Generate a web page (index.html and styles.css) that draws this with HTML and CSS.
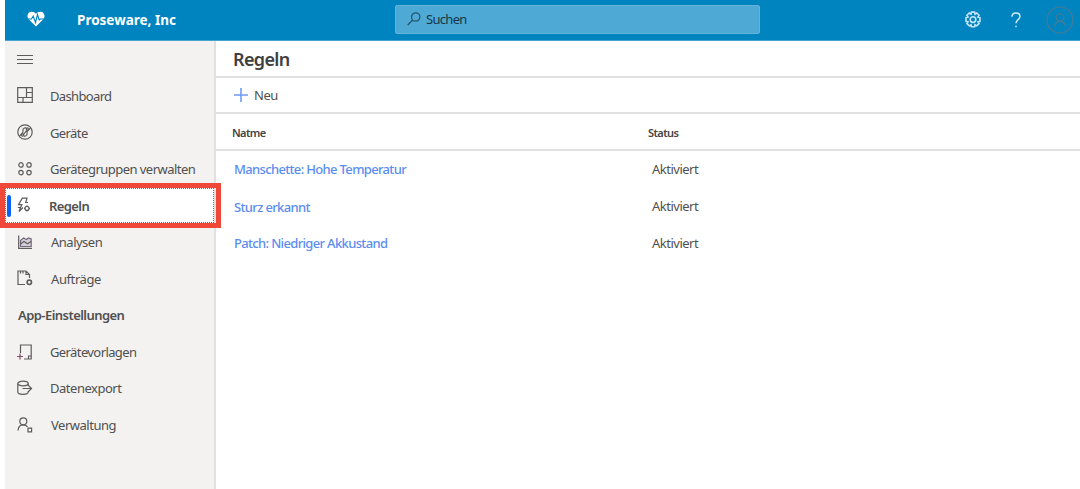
FILE: index.html
```html
<!DOCTYPE html>
<html lang="de">
<head>
<meta charset="utf-8">
<title>Proseware, Inc</title>
<link rel="stylesheet" href="styles.css">
</head>
<body>
<div class="app">
  <header class="topbar">
    <svg class="logo" viewBox="0 0 18 16"><path d="M9 15.500 1.500 8C-.8 5 .8.700 4.600.700 6.700.700 8 1.600 9 3 10 1.600 11.300.700 13.400.700 17.200.700 18.800 5 16.500 8Z" fill="#fff"/><path d="M0 8h4.500l1.700-3 2.300 6.500 2-8 1.700 5.500 1-1H18" fill="none" stroke="#0084c0" stroke-width="1.100"/></svg>
    <div class="brand">Proseware, Inc</div>
    <div class="search"><svg class="lens" viewBox="0 0 14 14"><circle cx="8.700" cy="5" r="4.200"/><path d="M5.700 8 .700 13"/></svg><span>Suchen</span></div>
    <div class="actions">
      <svg class="gear" viewBox="0 0 16 16"><path d="M6.600 1h2.800l.4 1.800 1.600-1 2 2-1 1.600 1.800.4v3.400l-1.800.5 1 1.500-2 2-1.600-1-.4 1.800H6.600l-.4-1.800-1.600 1-2-2 1-1.500-1.800-.5V5.800l1.800-.4-1-1.600 2-2 1.600 1Z"/><circle cx="8" cy="7.600" r="2.500"/></svg>
      <svg class="help" viewBox="0 0 10 16"><path d="M1 4.800C1 2.300 2.600 1 5 1s4 1.300 4 3.500C9 7.600 5 7.600 5 11.300M5 13.700v1.600"/></svg>
      <svg class="avatar" viewBox="0 0 28 28"><circle cx="14" cy="14" r="13"/><circle cx="14" cy="11.500" r="3.800"/><path d="M8.500 20.500c.5-3.500 2.700-5.200 5.500-5.200s5 1.700 5.500 5.200"/></svg>
    </div>
  </header>
  <div class="body">
    <nav class="sidebar">
      <div class="item"><svg class="icon" viewBox="0 0 16 16"><path d="M0 4.500h16M0 8.500h16M0 12.500h16"/></svg></div>
      <div class="item"><svg class="icon" viewBox="0 0 16 16"><path d="M.7.700h14.600v14.600H.700ZM9.500.700v10M.700 10.500h14.600M9.500 5.500h5.800M6 10.500v4.800"/></svg><span class="t-dash">Dashboard</span></div>
      <div class="item"><svg class="icon" viewBox="0 0 16 16"><circle cx="8" cy="8" r="7.200"/><path d="M2.500 12 5.500 9C7 7.500 4.500 5.500 7 4.200L9 3.700M13.500 4 10.500 7C9 8.500 11.500 10.500 9 11.800L7 12.300M6.500 10.500 9.700 6.300"/><circle cx="10.300" cy="5" r="1.100"/><circle cx="5.700" cy="11" r="1.100"/></svg><span class="t-ger">Geräte</span></div>
      <div class="item"><svg class="icon" viewBox="0 0 16 16"><circle cx="4" cy="3.900" r="2.200"/><circle cx="12" cy="3.900" r="2.200"/><circle cx="4" cy="11.600" r="2.200"/><circle cx="12" cy="11.600" r="2.200"/></svg><span class="t-group">Gerätegruppen verwalten</span></div>
      <div class="item selected"><svg class="icon" viewBox="0 0 16 16"><path d="M9.500 6 11 1.200H6.300L2.500 7.600h3.300L3 14.500l4-4M9.500 5.500H12M1.800 10.500h3"/><circle cx="11" cy="11.400" r="2"/><path d="M11 8.400v1M11 13.400v1M8 11.400h1M13 11.400h1"/></svg><span class="t-rules">Regeln</span></div>
      <div class="item"><svg class="icon" viewBox="0 0 16 16"><path d="M1.700 1.500v12.800H15"/><path class="violet" d="M3.500 12.500V6.500l3-2.500 3 1.500 2-1.500 2.700 1v7.500Z"/><path d="M3.500 10 7 7.500l3.500 2.300L14 7.500"/></svg><span class="t-ana">Analysen</span></div>
      <div class="item"><svg class="icon" viewBox="0 0 16 16"><path d="M8 14.500H1V1h8l3.500 3.500V8M9 1v3.500h3.500M3.500 1v2.500M6 1v2.500"/><circle cx="12.300" cy="12.300" r="2.200" stroke-width="1.600"/></svg><span class="t-auf">Aufträge</span></div>
      <div class="section">App-Einstellungen</div>
      <div class="item"><svg class="icon" viewBox="0 0 16 16"><path d="M3.500 9V1h10.700v14H7M11.500 15v-3h2.700"/><path class="plum" d="M0 12.500h6M3 9.500v6"/></svg><span class="t-vor">Gerätevorlagen</span></div>
      <div class="item"><svg class="icon" viewBox="0 0 16 16"><ellipse cx="6" cy="3.500" rx="5.200" ry="2.300"/><path d="M.8 3.500V12c0 1.300 2.300 2.300 5.200 2.300s5.200-1 5.200-2.300v-1M11.200 3.500V6M5.500 8.500h9M11.500 5.500l3 3-3 3"/></svg><span class="t-exp">Datenexport</span></div>
      <div class="item"><svg class="icon" viewBox="0 0 16 16"><circle cx="6.300" cy="4.300" r="3.500"/><path d="M1 13.500C1.300 9.800 3.500 7.800 6.300 7.800c2 0 3.300.8 4.200 2.200M11 11.200h3.600v3.600H11Z"/></svg><span class="t-ver">Verwaltung</span></div>
    </nav>
    <main class="main">
      <h1 class="title">Regeln</h1>
      <div class="toolbar"><svg class="plus" viewBox="0 0 14 14"><path d="M0 7h14M7 0v14"/></svg><span>Neu</span></div>
      <div class="grid head"><span>Natme</span><span>Status</span></div>
      <div class="grid row"><a>Manschette: Hohe Temperatur</a><span class="state">Aktiviert</span></div>
      <div class="grid row"><a class="l-stu">Sturz erkannt</a><span class="state">Aktiviert</span></div>
      <div class="grid row"><a>Patch: Niedriger Akkustand</a><span class="state">Aktiviert</span></div>
    </main>
  </div>
  <div class="highlight"></div>
</div>
</body>
</html>
```
FILE: styles.css
```css
* { box-sizing: border-box; }
body { margin: 0; background: #fff; font: 13px/18px "Noto Sans", "Open Sans", sans-serif; color: #505050; overflow: hidden; }
svg { flex: none; fill: none; }
span, a { white-space: nowrap; }
.app { position: relative; width: 1080px; height: 489px; padding-left: 5px; display: flex; flex-direction: column; }
.topbar { height: 41px; flex: none; display: flex; align-items: center; background: #0084c0; border-bottom: 1px solid #45a4d1; padding-left: 22px; }
.logo { width: 18px; height: 16px; margin-top: -2px; }
.brand { width: 319px; margin-left: 31px; padding-left: 1px; color: #fff; font-size: 13.5px; font-weight: 700; }
.search { width: 365px; height: 29px; margin-top: -2px; display: flex; align-items: center; padding-left: 11px; gap: 5px; background: #4ea9d4; border: 1px solid #62b3d9; border-radius: 2px; color: #173848; letter-spacing: -.7px; }
.lens { width: 14px; height: 14px; stroke: #24566d; stroke-width: 1.2; }
.actions { flex: 1; height: 38px; display: flex; align-items: center; padding-left: 204px; }
.gear { width: 18px; height: 18px; stroke: #c5e5f4; stroke-width: 1.4; }
.help { width: 10px; height: 16px; margin-left: 29px; stroke: #d0eaf6; stroke-width: 1.5; }
.avatar { width: 28px; height: 28px; margin-left: 25px; stroke: #477b96; stroke-width: 1.2; }
.body { flex: 1; display: flex; min-height: 0; }
.sidebar { width: 211px; background: #f3f2f1; border-right: 2px solid #e1e1e1; }
.item { height: 36.6px; display: flex; align-items: center; gap: 17px; padding-left: 12px; }
.icon { width: 16px; height: 16px; stroke: #5c5c5c; stroke-width: 1.2; margin-top: -1px; }
.violet { fill: #d5cfd8; stroke: #75697e; }
.plum { stroke: #804c68; }
.t-dash { letter-spacing: -.65px; }
.t-ger { letter-spacing: -.6px; padding-top: 1px; }
.t-group { letter-spacing: -.54px; }
.t-rules { letter-spacing: -.6px; font-weight: 600; }
.t-ana { letter-spacing: -.5px; margin-left: 1px; }
.t-auf { letter-spacing: -.4px; margin-left: 1px; }
.t-vor { letter-spacing: -.6px; padding-bottom: 1px; }
.t-exp { letter-spacing: -.48px; padding-bottom: 1px; }
.t-ver { letter-spacing: -.48px; margin-left: 1px; }
.selected { height: 35px; margin: 1px 0 .6px; background: #fff; border: 1px dotted #2878f5; padding-left: 0; }
.selected::before { content: ""; width: 4px; height: 22px; margin: 0 -12px 0 1px; border-radius: 2px; background: #0b61f5; }
.section { height: 36.6px; padding: 9px 0 0 13px; font-weight: 600; letter-spacing: -.55px; }
.main { flex: 1; }
.title { height: 37px; margin: 0; padding: 0 17px; border-bottom: 2px solid #e1e1e1; font-size: 18px; line-height: 37px; font-weight: 600; letter-spacing: -.65px; color: #404040; }
.toolbar { height: 36px; display: flex; align-items: center; gap: 6px; padding-left: 18px; border-bottom: 2px solid #e1e1e1; letter-spacing: -.5px; }
.plus { width: 14px; height: 14px; stroke: #6d9bfa; stroke-width: 1.6; }
.grid { display: grid; grid-template-columns: 416px 1fr; align-items: center; padding-left: 16px; }
.head { height: 37px; padding-top: 2px; border-bottom: 2px solid #e1e1e1; font-size: 11px; font-weight: 600; letter-spacing: -.6px; color: #444; }
.row { height: 36.8px; padding-left: 18px; }
.row a { color: #5b8def; font-weight: 500; letter-spacing: -.66px; }
.row .l-stu { padding-top: 2px; }
.state { padding-left: 2px; letter-spacing: -.5px; }
.highlight { position: absolute; left: 0; top: 183px; width: 221px; height: 45px; border: 5px solid #f04838; }
```
